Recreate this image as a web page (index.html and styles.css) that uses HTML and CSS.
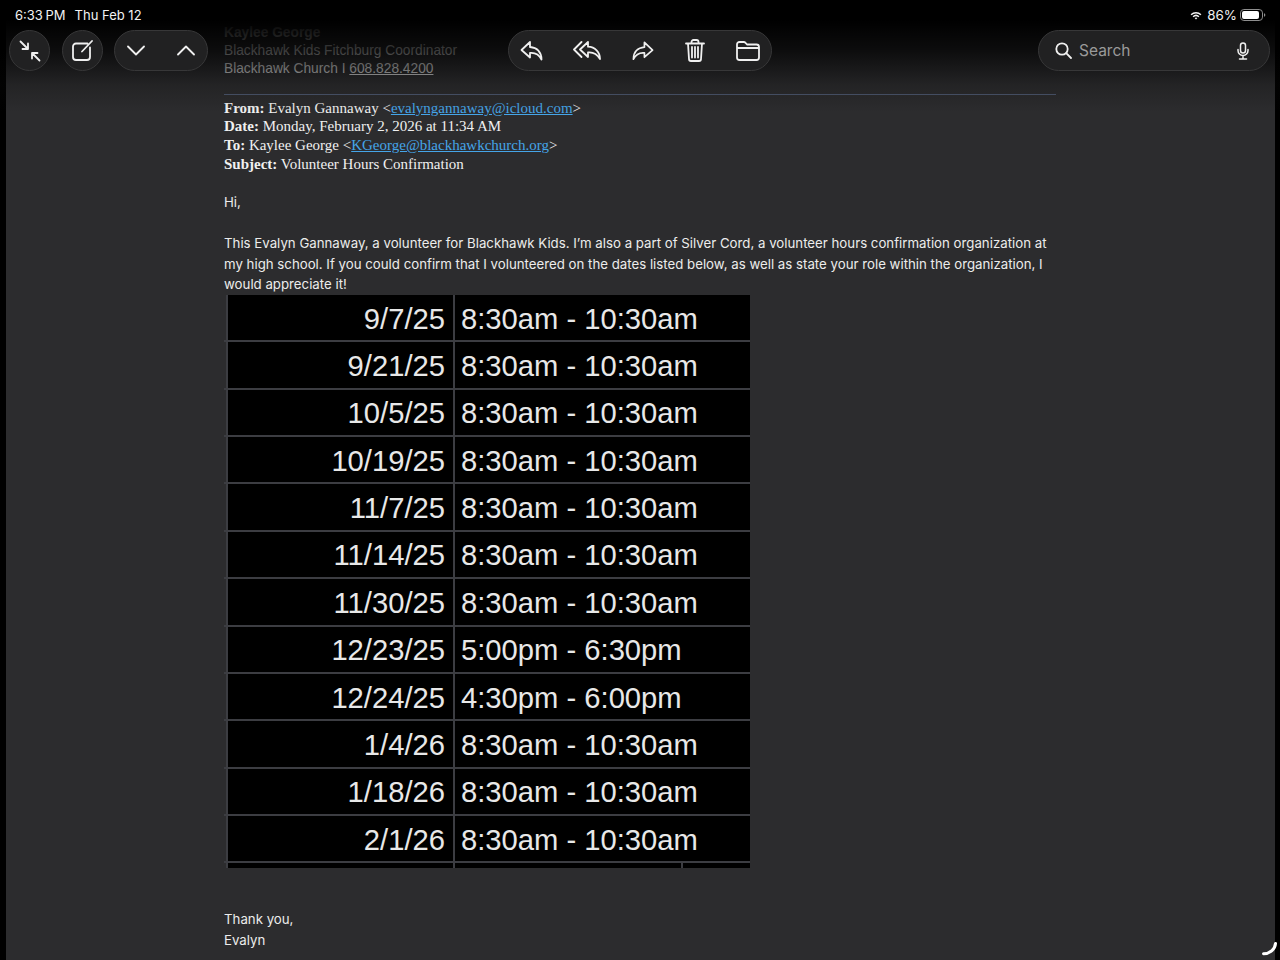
FILE: index.html
```html
<!DOCTYPE html>
<html lang="en">
<head>
<meta charset="utf-8">
<title>Mail</title>
<link rel="stylesheet" href="styles.css">
</head>
<body>
<div class="screen">
  <main class="mail">
    <div class="sig">
      <div class="sig-name">Kaylee George</div>
      <div>Blackhawk Kids Fitchburg Coordinator</div>
      <div>Blackhawk Church I <u>608.828.4200</u></div>
    </div>
    <hr class="rule">
    <div class="meta">
      <div><b>From:</b> Evalyn Gannaway &lt;<a href="#">evalyngannaway@icloud.com</a>&gt;</div>
      <div><b>Date:</b> Monday, February 2, 2026 at 11:34 AM</div>
      <div><b>To:</b> Kaylee George &lt;<a href="#">KGeorge@blackhawkchurch.org</a>&gt;</div>
      <div><b>Subject:</b> Volunteer Hours Confirmation</div>
    </div>
    <p class="hi">Hi,</p>
    <p class="para">This Evalyn Gannaway, a volunteer for Blackhawk Kids. I’m also a part of Silver Cord, a volunteer hours confirmation organization at my high school. If you could confirm that I volunteered on the dates listed below, as well as state your role within the organization, I would appreciate it!</p>
    <div class="hours">
      <div class="row first"><div class="d">9/7/25</div><div class="t">8:30am - 10:30am</div></div>
      <div class="row"><div class="d">9/21/25</div><div class="t">8:30am - 10:30am</div></div>
      <div class="row"><div class="d">10/5/25</div><div class="t">8:30am - 10:30am</div></div>
      <div class="row"><div class="d">10/19/25</div><div class="t">8:30am - 10:30am</div></div>
      <div class="row"><div class="d">11/7/25</div><div class="t">8:30am - 10:30am</div></div>
      <div class="row"><div class="d">11/14/25</div><div class="t">8:30am - 10:30am</div></div>
      <div class="row"><div class="d">11/30/25</div><div class="t">8:30am - 10:30am</div></div>
      <div class="row"><div class="d">12/23/25</div><div class="t">5:00pm - 6:30pm</div></div>
      <div class="row"><div class="d">12/24/25</div><div class="t">4:30pm - 6:00pm</div></div>
      <div class="row"><div class="d">1/4/26</div><div class="t">8:30am - 10:30am</div></div>
      <div class="row"><div class="d">1/18/26</div><div class="t">8:30am - 10:30am</div></div>
      <div class="row"><div class="d">2/1/26</div><div class="t">8:30am - 10:30am</div></div>
      <div class="row stub"><div class="d"></div><div class="t"></div><div class="x"></div></div>
    </div>
    <p class="thanks">Thank you,<br>Evalyn</p>
  </main>

  <div class="fade"></div>

  <header class="top">
    <div class="status">
      <div class="clock"><span class="time">6:33 PM</span><span>Thu Feb 12</span></div>
      <div class="sys">
        <svg class="wifi" width="12" height="9" viewBox="0 0 12 9"><path d="M.6 3.2a7.8 7.8 0 0 1 10.8 0l-1 1a6.4 6.4 0 0 0-8.8 0zM2.6 5.2a5 5 0 0 1 6.8 0l-1 1a3.6 3.6 0 0 0-4.8 0zM4.6 7.1a2.2 2.2 0 0 1 2.8 0L6 8.6z" fill="#f2f2f2"/></svg>
        <span>86%</span>
        <svg width="26" height="12" viewBox="0 0 26 12"><rect x=".5" y=".5" width="22" height="11" rx="3.4" fill="none" stroke="#8e8e8e"/><rect x="2" y="2" width="17" height="8" rx="2" fill="#fff"/><path d="M24 4.2c.9.3 1.3 1 1.3 1.8s-.4 1.500-1.300 1.800z" fill="#8e8e8e"/></svg>
      </div>
    </div>
    <div class="tools">
      <div class="group">
        <div class="btn round">
          <svg width="22" height="22" viewBox="0 0 22 22" class="ic"><path d="M1.500 1.500 9 9M9 3.500V9H3.500M20.500 20.500 13 13M13 18.500V13h5.500"/></svg>
        </div>
        <div class="btn round">
          <svg width="21" height="21" viewBox="0 0 21 21" class="ic"><path d="M15.500 3.500H4a3 3 0 0 0-3 3V17a3 3 0 0 0 3 3h11a3 3 0 0 0 3-3V7.500M20 1 10 11.500"/></svg>
        </div>
        <div class="btn pill-nav">
          <svg width="18" height="11" viewBox="0 0 18 11" class="ic"><path d="m1 1.500 8 8 8-8"/></svg>
          <svg width="18" height="11" viewBox="0 0 18 11" class="ic"><path d="m1 9.500 8-8 8 8"/></svg>
        </div>
      </div>
      <div class="btn actions">
        <svg width="23" height="20" viewBox="0 0 23 20" class="ic"><path d="M10 1 1.500 9 10 16.500V12c5-.5 9 1.500 11.500 6.500C21.500 11 17 6.500 10 6z"/></svg>
        <svg width="28" height="20" viewBox="0 0 28 20" class="ic"><path d="M8.500 1 1 8.500 8.500 16M15 1 7 8.500l8 7.500v-4.500c5-.5 9 1.500 12 6.500C27 11 22 6 15 5.700z"/></svg>
        <svg width="22" height="20" viewBox="0 0 23 20" class="ic"><path d="M13 1l8.500 8L13 16.500V12c-5-.5-9 1.500-11.500 6.500C1.500 11 6 6.500 13 6z"/></svg>
        <svg width="20" height="23" viewBox="0 0 20 23" class="ic"><path d="M1 4.500h18M6.500 4.500V3a2 2 0 0 1 2-2h3a2 2 0 0 1 2 2v1.500M3 4.500 4 20a2 2 0 0 0 2 2h8a2 2 0 0 0 2-2l1-15.500M7 8v10.500M10 8v10.500M13 8v10.500"/></svg>
        <svg width="24" height="20" viewBox="0 0 24 20" class="ic"><path d="M1 6V3.500A2.500 2.500 0 0 1 3.500 1h4.300a2 2 0 0 1 1.500.7L11 3.500h9.500A2.500 2.500 0 0 1 23 6v10.500a2.500 2.500 0 0 1-2.500 2.500h-17A2.500 2.500 0 0 1 1 16.500zM1 7h22"/></svg>
      </div>
      <div class="search-wrap">
        <div class="btn search">
          <svg width="17" height="17" viewBox="0 0 17 17" class="ic"><circle cx="7" cy="7" r="5.700"/><path d="m11.200 11.200 4.800 4.800"/></svg>
          <span class="q">Search</span>
          <svg class="mic" width="12" height="18" viewBox="0 0 12 18"><rect x="3.500" y="1" width="5" height="10" rx="2.500"/><path d="M1 7.500v1a5 5 0 0 0 10 0v-1M6 13.500V16.500M2.500 17h7"/></svg>
        </div>
      </div>
    </div>
  </header>

  <svg class="corner" width="16" height="14" viewBox="0 0 16 14"><path d="M14.500 1.500C14 7 9.500 11.500 2.500 11.800" fill="none" stroke="#fff" stroke-width="3" stroke-linecap="round"/></svg>
</div>
</body>
</html>
```
FILE: styles.css
```css
* { box-sizing: border-box; }
html, body { margin: 0; height: 100%; background: #000; }
body { overflow: hidden; }

.screen {
  position: relative;
  width: 1280px;
  height: 960px;
  padding: 0 5px 0 6px;
  overflow: hidden;
  font-family: Inter, "Liberation Sans", sans-serif;
}

.mail {
  height: 960px;
  background: #2c2c2e;
  padding: 24px 0 0 218px;
  color: #f0f0f0;
  overflow: hidden;
}

.sig {
  width: 832px;
  font-family: "Liberation Sans", Arial, sans-serif;
  font-size: 13.75px;
  line-height: 18px;
  color: #d2d2d2;
}
.sig-name { font-weight: 700; }

.rule {
  width: 832px;
  height: 1px;
  margin: 16px 0 0;
  border: 0;
  background: #4f5a72;
}

.meta {
  margin-top: 3.7px;
  font-family: "Liberation Serif", "Times New Roman", serif;
  font-size: 15px;
  line-height: 18.67px;
  color: #f0f0f0;
}
.meta a { color: #45a5e8; }

.hi, .para, .thanks {
  margin: 0;
  font-size: 13.26px;
  line-height: 20.5px;
  color: #ececec;
  width: 832px;
}
.hi { margin-top: 19px; }
.para { margin-top: 20.500px; }
.thanks { margin-top: 41.500px; }

.hours {
  width: 526px;
  height: 573px;
  overflow: hidden;
  font-family: "Liberation Sans", Arial, sans-serif;
  font-size: 29.2px;
  color: #e8e8e8;
}

.row {
  display: grid;
  grid-template-columns: 231px 295px;
  height: 47.36px;
  border-bottom: 2px solid #3c3d42;
}
.row.first { height: 47.500px; }
.d, .t {
  display: flex;
  align-items: center;
  background: #000;
  padding-top: 3px;
}
.d {
  justify-content: flex-end;
  margin-left: 2px;
  padding-right: 8px;
  border-left: 2px solid #3c3d42;
  border-right: 2px solid #3c3d42;
}
.t { padding-left: 6px; }

.row.stub {
  grid-template-columns: 231px 226px 69px;
  height: 20px;
  border-bottom: 0;
}
.x { background: #000; border-left: 2px solid #3c3d42; }

.fade {
  position: absolute;
  inset: 0 0 auto 0;
  height: 112px;
  background: linear-gradient(to bottom, #000 0, #000 20px, rgba(0, 0, 0, .72) 50px, rgba(10, 10, 10, .25) 85px, rgba(44, 44, 46, 0) 112px);
}

.top { position: absolute; inset: 0 0 auto 0; color: #f2f2f2; }

.status {
  display: flex;
  justify-content: space-between;
  align-items: center;
  height: 30px;
  padding: 0 14px 0 15px;
  font-size: 13px;
}
.clock { display: flex; gap: 9px; }
.time { word-spacing: -1px; }
.sys { display: flex; align-items: center; gap: 5px; }
.sys span { font-size: 13.4px; margin-right: -2px; }

.tools {
  display: grid;
  grid-template-columns: 1fr auto 1fr;
  align-items: center;
  padding: 0 10px 0 9px;
}
.group { display: flex; gap: 11.500px; }
.search-wrap { display: flex; justify-content: flex-end; }

.btn {
  display: flex;
  align-items: center;
  height: 41px;
  background: #212122;
  border: 1px solid #373738;
  border-radius: 21px;
}
.round { width: 41px; justify-content: center; }
.pill-nav { width: 94px; justify-content: space-between; padding: 0 12px; }
.actions { width: 264px; justify-content: space-between; padding: 0 11px; }
.search { width: 232px; padding: 0 20px 0 16px; gap: 7px; }
.q { flex: 1; font-size: 15.5px; color: #9a9a9a; }

.ic, .mic {
  fill: none;
  stroke: #f0f0f0;
  stroke-width: 1.800;
  stroke-linecap: round;
  stroke-linejoin: round;
}
.mic { stroke-width: 1.500; }

.corner { position: absolute; right: 3px; bottom: 4px; }
```
